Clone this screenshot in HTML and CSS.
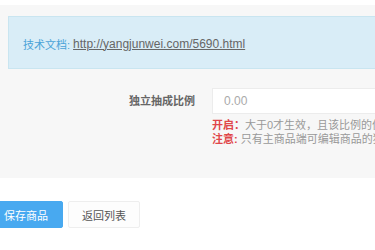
FILE: index.html
```html
<!DOCTYPE html>
<html lang="zh-CN">
<head>
    <meta charset="UTF-8">
    <meta name="viewport" content="width=device-width, initial-scale=1.0">
    <title>编辑商品</title>
    <link rel="stylesheet" href="styles.css">
</head>
<body>
    <div class="page">
        <div class="panel">
            <div class="alert">
                <span class="alert-label">技术文档:</span>
                <a href="http://yangjunwei.com/5690.html">http://yangjunwei.com/5690.html</a>
            </div>
            <div class="form-row">
                <label class="form-label" for="ratio">独立抽成比例</label>
                <div class="form-field">
                    <input id="ratio" type="text" placeholder="0.00">
                    <p class="help"><b>开启：</b>大于0才生效，且该比例的优先级高于全局设置的抽成比例</p>
                    <p class="help"><b>注意:</b> 只有主商品端可编辑商品的独立抽成比例，子商品端不可编辑</p>
                </div>
            </div>
        </div>
        <div class="actions">
            <button class="btn btn-primary" type="submit">保存商品</button>
            <button class="btn btn-default" type="button">返回列表</button>
        </div>
    </div>
</body>
</html>
```

FILE: styles.css
```css
html, body {
    overflow: hidden;
}
body {
    font-family: "Liberation Sans", "Noto Sans CJK SC", sans-serif;
    font-size: 11px;
    color: #666;
    background-color: #fff;
    margin: 0;
    padding: 0;
}
.page {
    width: 700px;
    padding-top: 5px;
}
.panel {
    background-color: #f7f7f7;
    padding: 11px 0 0;
    height: 162px;
}
.alert {
    margin-left: 8px;
    height: 49px;
    padding: 2px 14px 0;
    background-color: #d9edf7;
    border: 1px solid #c9e5f0;
    display: flex;
    align-items: center;
    gap: 3px;
}
.alert-label {
    color: #4aa3d8;
}
.alert a {
    font-size: 12px;
    color: #666;
    text-decoration: underline;
}
.form-row {
    display: flex;
    margin-top: 19px;
}
.form-label {
    width: 212px;
    flex-shrink: 0;
    text-align: right;
    font-weight: bold;
    color: #666;
    line-height: 26px;
    padding-right: 17px;
    box-sizing: border-box;
}
.form-field input {
    box-sizing: border-box;
    width: 420px;
    height: 26px;
    border: 1px solid #ececec;
    background: #fff;
    padding: 0 11px;
    font-family: "Liberation Sans", sans-serif;
    font-size: 12px;
    color: #666;
    outline: none;
}
.form-field input::placeholder {
    color: #aaa;
}
.help {
    margin: 0;
    line-height: 14px;
    color: #999;
    white-space: nowrap;
}
.form-field input + .help {
    margin-top: 4px;
}
.help b {
    color: #e0474a;
}
.actions {
    display: flex;
    gap: 5px;
    padding-top: 23px;
}
.btn {
    height: 27px;
    font-family: "Liberation Sans", "Noto Sans CJK SC", sans-serif;
    font-size: 11px;
    border-radius: 2px;
    cursor: pointer;
}
.btn-primary {
    margin-left: -11px;
    padding: 0 14px;
    background-color: #48a9f0;
    border: 1px solid #48a9f0;
    color: #fff;
}
.btn-default {
    padding: 0 13px;
    background-color: #fdfdfd;
    border: 1px solid #eee;
    color: #555;
}
```
